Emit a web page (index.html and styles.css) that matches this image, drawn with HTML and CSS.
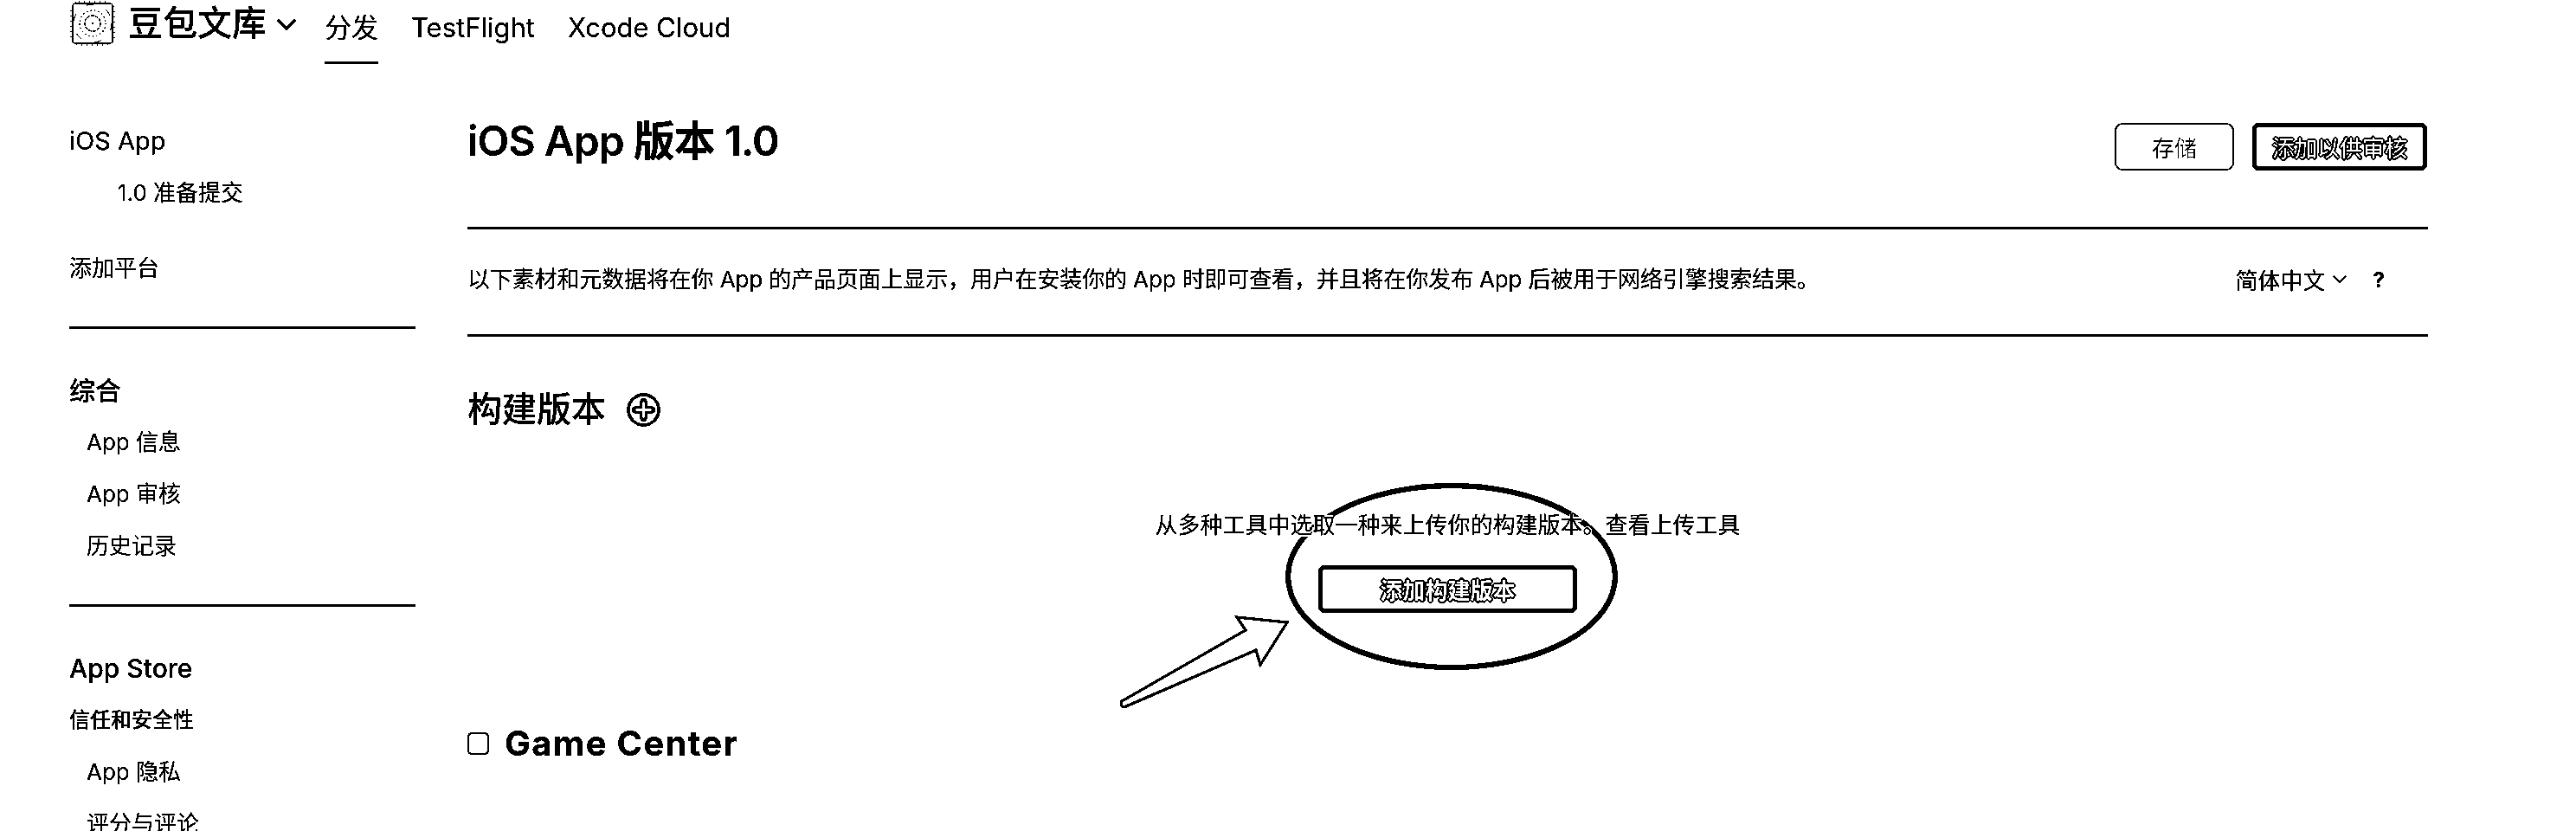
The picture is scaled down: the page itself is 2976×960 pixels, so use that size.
FILE: index.html
```html
<!DOCTYPE html>
<html lang="zh-CN">
<head>
  <title>iOS App 版本 1.0</title>
  <link rel="stylesheet" href="styles.css">
</head>
<body>

<svg class="defs" width="0" height="0">
  <filter id="mono" color-interpolation-filters="sRGB">
    <feComponentTransfer>
      <feFuncR type="discrete" tableValues="0 0 1"/>
      <feFuncG type="discrete" tableValues="0 0 1"/>
      <feFuncB type="discrete" tableValues="0 0 1"/>
    </feComponentTransfer>
  </filter>
</svg>

<div class="page">

  <!-- Top bar -->
  <header class="topbar">
    <svg class="app-icon" viewBox="0 0 52 52" width="52" height="52">
      <rect x="1" y="1" width="50" height="50" rx="9" fill="none" stroke="#000" stroke-width="1" stroke-dasharray="1 5"/>
      <rect x="3" y="3" width="46" height="46" rx="3" fill="none" stroke="#000" stroke-width="1.2"/>
      <circle cx="26" cy="26" r="22" fill="none" stroke="#000" stroke-width="1" stroke-dasharray="8 16"/>
      <circle cx="26" cy="26" r="15" fill="none" stroke="#000" stroke-width="1.2" stroke-dasharray="1.5 3"/>
      <circle cx="26" cy="26" r="9" fill="none" stroke="#000" stroke-width="1.2" stroke-dasharray="4 1"/>
      <circle cx="26" cy="26" r="1.2"/>
    </svg>
    <span class="app-name">豆包文库</span>
    <svg class="chev" viewBox="0 0 22 13" width="22" height="13"><path d="M1 1l10 10L21 1" fill="none" stroke="#000" stroke-width="3"/></svg>
    <nav class="tabs">
      <a class="tab active">分发</a>
      <a class="tab">TestFlight</a>
      <a class="tab">Xcode Cloud</a>
    </nav>
  </header>

  <div class="layout">

    <!-- Left menu -->
    <aside class="side">
      <div class="row head">iOS App</div>
      <div class="row ver">1.0 准备提交</div>
      <div class="row add">添加平台</div>
      <hr class="rule side-rule">
      <div class="row head strong first">综合</div>
      <div class="row item">App 信息</div>
      <div class="row item">App 审核</div>
      <div class="row item">历史记录</div>
      <hr class="rule side-rule">
      <div class="row head strong first">App Store</div>
      <div class="row sub">信任和安全性</div>
      <div class="row item">App 隐私</div>
      <div class="row item">评分与评论</div>
    </aside>

    <!-- Main column -->
    <main class="main">
      <div class="title-row">
        <h1>iOS App 版本 1.0</h1>
        <div class="actions">
          <button class="btn save">存储</button>
          <button class="btn submit halo">添加以供审核</button>
        </div>
      </div>
      <hr class="rule">
      <div class="desc-row">
        <p class="desc">以下素材和元数据将在你 App 的产品页面上显示，用户在安装你的 App 时即可查看，并且将在你发布 App 后被用于网络引擎搜索结果。</p>
        <div class="lang">
          <span>简体中文</span>
          <svg class="chev-sm" viewBox="0 0 16 10" width="16" height="10"><path d="M1 1l7 7 7-7" fill="none" stroke="#000" stroke-width="2"/></svg>
          <b class="help">?</b>
        </div>
      </div>
      <hr class="rule">
      <h2 class="build-title">构建版本
        <svg class="plus" viewBox="0 0 39 39" width="39" height="39">
          <circle cx="19.5" cy="19.5" r="17.5" fill="none" stroke="#000" stroke-width="3.5"/>
          <path d="M19.5 10v19M10 19.5h19" fill="none" stroke="#000" stroke-width="8" stroke-linecap="round"/>
          <path d="M19.5 11.5v16M11.5 19.5h16" fill="none" stroke="#fff" stroke-width="3" stroke-linecap="round"/>
        </svg>
      </h2>
      <div class="empty">
        <p class="empty-text">从多种工具中选取一种来上传你的构建版本。查看上传工具</p>
        <button class="btn add-build halo">添加构建版本</button>
      </div>
      <div class="game">
        <span class="check"></span>
        <h2>Game Center</h2>
      </div>
    </main>
  </div>

  <!-- Hand drawn annotation on top of the screenshot -->
  <svg class="marks" viewBox="0 0 2976 960" width="2976" height="960">
    <ellipse cx="1677" cy="666" rx="189" ry="105" fill="none" stroke="#000" stroke-width="6"/>
    <path d="M1439 728L1429 713L1487 719L1456 768L1451 751L1301 816Q1293 818 1296 810Z" fill="#fff" stroke="#000" stroke-width="3" stroke-linejoin="miter"/>
  </svg>
</div>

</body>
</html>
```

FILE: styles.css
```css
html, body {
  margin: 0;
  padding: 0;
  background: #fff;
}
.defs {
  position: absolute;
}
.page {
  position: relative;
  width: 2976px;
  height: 960px;
  overflow: hidden;
  background: #fff;
  color: #000;
  font-family: Inter, "Noto Sans CJK SC", sans-serif;
  font-size: 26px;
  filter: url(#mono);
}

/* Top bar */
.topbar {
  display: flex;
  align-items: flex-start;
  height: 74px;
  padding-left: 81px;
}
.app-icon {
  margin-top: 1px;
  flex: none;
}
.app-name {
  margin: 3px 0 0 15px;
  font-size: 40px;
  line-height: 48px;
  font-weight: 500;
}
.chev {
  margin: 22px 0 0 12px;
}
.tabs {
  display: flex;
  gap: 38px;
  margin-left: 33px;
}
.tab {
  height: 71px;
  font-size: 31px;
  line-height: 64px;
  box-sizing: border-box;
}
.tab.active {
  border-bottom: 3px solid #000;
  height: 74px;
}

/* Page columns */
.layout {
  display: grid;
  grid-template-columns: 400px 2265px;
  gap: 60px;
  padding: 59px 0 0 80px;
}

/* Left menu */
.row {
  height: 60px;
  line-height: 60px;
  white-space: nowrap;
}
.head {
  font-size: 29px;
}
.strong {
  font-size: 30px;
  font-weight: 500;
}
.ver {
  padding-left: 56px;
}
.add {
  margin-top: 27px;
}
.item {
  padding-left: 20px;
}
.sub {
  font-size: 24px;
  font-weight: 500;
}
.first {
  margin-top: 41px;
}
.rule {
  height: 3px;
  margin: 0;
  border: 0;
  background: #000;
}
.side-rule {
  margin-top: 37px;
}

/* Main column */
.title-row {
  display: flex;
  justify-content: space-between;
  align-items: flex-start;
  height: 129px;
}
h1 {
  margin: 0;
  font-size: 48px;
  line-height: 60px;
  font-weight: 600;
  letter-spacing: -1px;
}
.actions {
  display: flex;
  gap: 21px;
  margin-top: 9px;
  padding-right: 1px;
}
.btn {
  height: 55px;
  box-sizing: border-box;
  padding: 0;
  background: none;
  border: 2px solid #000;
  border-radius: 7px;
  color: #000;
  font-family: inherit;
  font-size: 26px;
}
.save {
  width: 138px;
  color: #888;
  border-color: #555;
  border-radius: 9px;
}
.submit {
  width: 202px;
  border-width: 5px;
}
.halo {
  color: #fff;
  text-shadow: 2px 0 0 #000, -2px 0 0 #000, 0 2px 0 #000, 0 -2px 0 #000, 1px 1px 0 #000, -1px -1px 0 #000, 1px -1px 0 #000, -1px 1px 0 #000;
}
.desc-row {
  display: flex;
  justify-content: space-between;
  align-items: center;
  box-sizing: border-box;
  height: 121px;
  padding: 0 50px 10px 0;
}
.desc {
  margin: 0;
  letter-spacing: -0.14px;
}
.lang {
  display: flex;
  align-items: center;
  margin-top: 4px;
}
.chev-sm {
  margin-left: 8px;
}
.help {
  margin: 2px 0 0 31px;
  font-size: 24px;
}
.build-title {
  display: flex;
  align-items: center;
  gap: 24px;
  margin: 60px 0 0;
  font-size: 40px;
  line-height: 48px;
  font-weight: 500;
}
.empty {
  display: flex;
  flex-direction: column;
  align-items: center;
  margin: 90px 0 0;
  position: relative;
  z-index: 2;
}
.empty-text {
  margin: 0;
  line-height: 40px;
  text-shadow: 2px 0 0 #fff, -2px 0 0 #fff, 0 2px 0 #fff, 0 -2px 0 #fff;
}
.add-build {
  width: 299px;
  margin-top: 26px;
  border-width: 5px;
  font-weight: 600;
}
.game {
  display: flex;
  align-items: center;
  gap: 18px;
  margin-top: 127px;
}
.check {
  width: 25px;
  height: 26px;
  box-sizing: border-box;
  border: 2px solid #000;
  border-radius: 5px;
}
.game h2 {
  margin: 0;
  font-size: 40px;
  line-height: 48px;
  font-weight: 700;
  letter-spacing: 1.3px;
}

/* Annotation layer */
.marks {
  position: absolute;
  top: 0;
  left: 0;
  z-index: 1;
}
```
